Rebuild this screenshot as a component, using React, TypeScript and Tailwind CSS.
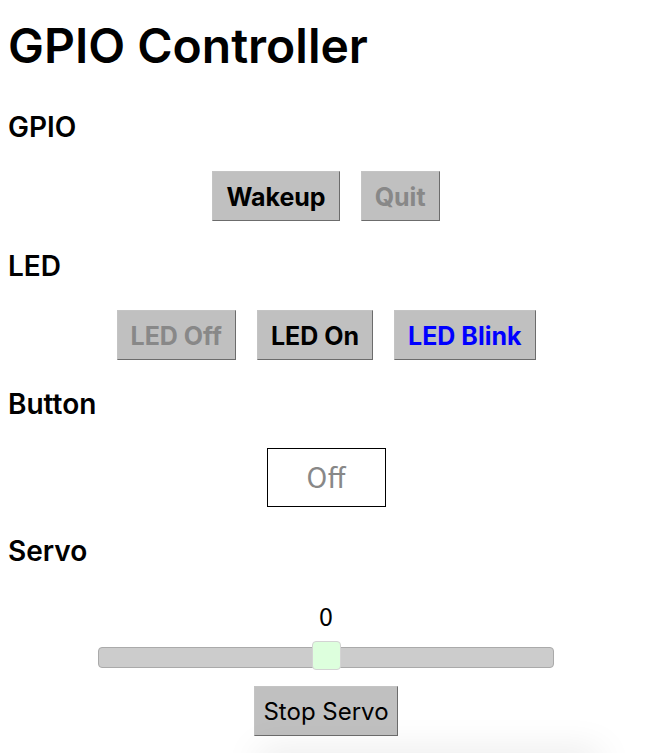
import { useState } from "react";
import type { ButtonHTMLAttributes, ReactNode } from "react";

function PushButton({ className = "", ...rest }: ButtonHTMLAttributes<HTMLButtonElement>) {
  return (
    <button
      type="button"
      className={`h-[50px] border border-t-[#c4c4c4] border-l-[#c4c4c4] border-r-[#6c6c6c] border-b-[#6c6c6c] bg-[#c0c0c0] pt-0.5 leading-8 whitespace-nowrap ${className}`}
      {...rest}
    />
  );
}

function Section({ title, children }: { title: string; children: ReactNode }) {
  return (
    <section>
      <h2 className="mb-[26px] text-[28px] leading-9 font-semibold">{title}</h2>
      {children}
    </section>
  );
}

export default function App() {
  const [angle, setAngle] = useState(0);
  return (
    <main className="flex flex-col gap-[26px] bg-white pt-[18px] pr-0.5 pl-2 font-['Inter',sans-serif] text-black">
      <h1 className="mb-[9px] text-[48px] leading-[56px] font-semibold">GPIO Controller</h1>

      <Section title="GPIO">
        <div className="flex justify-center gap-[21px] pb-px">
          <PushButton className="px-[13px] text-[25px] font-bold">Wakeup</PushButton>
          <PushButton className="px-[13px] text-[25px] font-bold text-[#888888]" disabled>Quit</PushButton>
        </div>
      </Section>

      <Section title="LED">
        <div className="flex justify-center gap-[21px]">
          <PushButton className="px-[13px] text-[25px] font-bold text-[#888888]" disabled>LED Off</PushButton>
          <PushButton className="px-[13px] text-[25px] font-bold">LED On</PushButton>
          <PushButton className="px-[13px] text-[25px] font-bold text-[#0000ff]">LED Blink</PushButton>
        </div>
      </Section>

      <Section title="Button">
        <div className="flex justify-center">
          <output className="flex h-[59px] w-[119px] items-center justify-center border border-black pb-1 font-['Noto_Sans_CJK_JP',sans-serif] text-[28px] leading-9 text-[#888888]">
            Off
          </output>
        </div>
      </Section>

      <Section title="Servo">
        <div className="flex flex-col items-center pt-1">
          <output htmlFor="servo" className="mb-4 font-['Noto_Sans_CJK_JP',sans-serif] text-[25px] leading-8">{angle}</output>
          <input
            id="servo"
            type="range"
            aria-label="Servo"
            min={-90}
            max={90}
            value={angle}
            onChange={(e) => setAngle(Number(e.target.value))}
            className="mb-[18px] block h-[21px] w-[456px] max-w-full appearance-none rounded-[4px] border border-[#aaaaaa] bg-[#cccccc] [&::-webkit-slider-thumb]:-mt-1 [&::-webkit-slider-thumb]:size-[29px] [&::-webkit-slider-thumb]:appearance-none [&::-webkit-slider-thumb]:rounded-[4px] [&::-webkit-slider-thumb]:border [&::-webkit-slider-thumb]:border-[#d3d3d3] [&::-webkit-slider-thumb]:bg-[#ddffdd]"
          />
          <PushButton className="px-2 text-[24px]">Stop Servo</PushButton>
        </div>
      </Section>

      <div className="pointer-events-none fixed inset-x-0 bottom-0 h-10 overflow-hidden">
        <div className="absolute top-full right-12 left-[260px] h-5 shadow-[0_0_36px_2px_rgba(0,0,0,0.1)]" />
      </div>
    </main>
  );
}
